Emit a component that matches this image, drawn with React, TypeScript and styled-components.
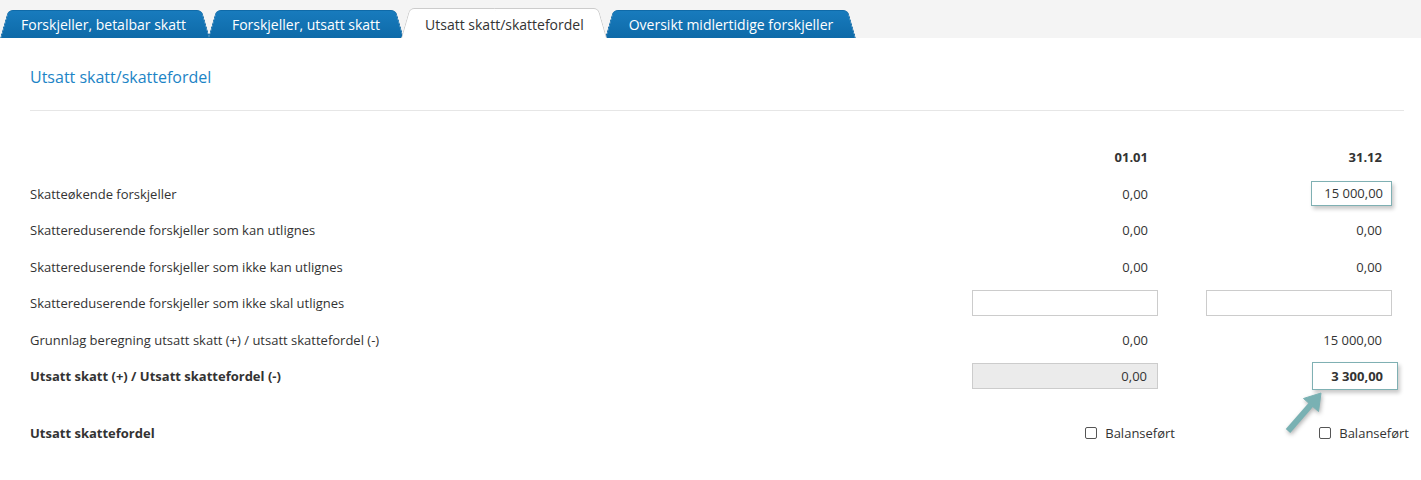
import React from 'react'
import styled, { createGlobalStyle } from 'styled-components'

type Row = {
  label: string
  bold?: boolean
  start: React.ReactNode
  end: React.ReactNode
}

const GlobalStyle = createGlobalStyle`
  html, body {
    margin: 0;
    padding: 0;
    background: #ffffff;
    font-family: "Open Sans", "Liberation Sans", sans-serif;
    font-size: 13px;
    color: #333333;
  }
`

const tabs = [
  'Forskjeller, betalbar skatt',
  'Forskjeller, utsatt skatt',
  'Utsatt skatt/skattefordel',
  'Oversikt midlertidige forskjeller',
]

const Arrow = () => (
  <ArrowWrap viewBox="0 0 50 50" width="50" height="50">
    <g fill="#79b1b3" stroke="#79b1b3">
      <line x1="8" y1="42" x2="31" y2="15.6" strokeWidth="6" strokeLinecap="butt" />
      <polygon points="41,4 38.5,22.5 23.5,9.5" strokeWidth="1" strokeLinejoin="round" />
    </g>
  </ArrowWrap>
)

const Checkbox = () => (
  <CheckLabel>
    <Box type="checkbox" />
    Balanseført
  </CheckLabel>
)

const App = () => {
  const rows: Row[] = [
    { label: 'Skatteøkende forskjeller', start: <Value>0,00</Value>, end: <Focused>15 000,00</Focused> },
    { label: 'Skattereduserende forskjeller som kan utlignes', start: <Value>0,00</Value>, end: <Value>0,00</Value> },
    { label: 'Skattereduserende forskjeller som ikke kan utlignes', start: <Value>0,00</Value>, end: <Value>0,00</Value> },
    { label: 'Skattereduserende forskjeller som ikke skal utlignes', start: <Field />, end: <Field /> },
    { label: 'Grunnlag beregning utsatt skatt (+) / utsatt skattefordel (-)', start: <Value>0,00</Value>, end: <Value>15 000,00</Value> },
    { label: 'Utsatt skatt (+) / Utsatt skattefordel (-)', bold: true, start: <Field $disabled>0,00</Field>, end: <Result>3 300,00</Result> },
  ]

  return (
    <>
      <GlobalStyle />
      <TabBar>
        {tabs.map((t, i) => (
          <Tab key={t} $active={i === 2}>
            <span>{t}</span>
          </Tab>
        ))}
      </TabBar>
      <Panel>
        <Heading>Utsatt skatt/skattefordel</Heading>
        <Table>
          <Label />
          <Head>01.01</Head>
          <Head>31.12</Head>
          {rows.map(r => (
            <React.Fragment key={r.label}>
              <Label $bold={r.bold}>{r.label}</Label>
              <Cell>{r.start}</Cell>
              <Cell>{r.end}</Cell>
            </React.Fragment>
          ))}
          <Label $bold>Utsatt skattefordel</Label>
          <Cell><Checkbox /></Cell>
          <Cell><Checkbox /></Cell>
        </Table>
        <Arrow />
      </Panel>
    </>
  )
}

const TabBar = styled.div`
  display: flex;
  align-items: flex-end;
  height: 38px;
  background: #f4f4f4;
`

const Tab = styled.div<{ $active?: boolean }>`
  position: relative;
  height: ${p => (p.$active ? 30 : 28)}px;
  padding: 0 23px 0 24px;
  margin-left: -2px;
  display: flex;
  align-items: center;
  font-size: 14px;
  color: ${p => (p.$active ? '#333333' : '#ffffff')};
  z-index: ${p => (p.$active ? 2 : 1)};

  &:first-child {
    margin-left: 0;
    padding-left: 21px;
    padding-right: 24px;
  }

  span {
    position: relative;
    z-index: 1;
    padding-top: ${p => (p.$active ? 2 : 0)}px;
  }

  &::before,
  &::after {
    content: '';
    position: absolute;
    top: 0;
    bottom: 0;
    width: 50%;
    background: ${p => (p.$active ? '#ffffff' : 'linear-gradient(#187bbd, #0e6aa8)')};
    border-top: 1px solid ${p => (p.$active ? '#cccccc' : '#0f6aa8')};
    transform-origin: bottom;
  }

  &::before {
    left: 0;
    border-left: 1px solid ${p => (p.$active ? '#cccccc' : '#0f6aa8')};
    border-top-left-radius: 5px;
    transform: skewX(-16deg);
  }

  &::after {
    right: 0;
    border-right: 1px solid ${p => (p.$active ? '#cccccc' : '#0f6aa8')};
    border-top-right-radius: 5px;
    transform: skewX(16deg);
  }
`

const Panel = styled.div`
  position: relative;
  padding: 0 29px 0 30px;
`

const Heading = styled.h2`
  margin: 0 -12px 0 0;
  padding: 28px 0 22px;
  font-size: 16px;
  line-height: 22px;
  font-weight: 400;
  color: #1c84c6;
  border-bottom: 1px solid #e6e6e6;
`

const Table = styled.div`
  display: grid;
  grid-template-columns: 1fr 186px 186px;
  grid-template-rows: repeat(7, 36.5px) 77px;
  column-gap: 48px;
  align-items: center;
  margin-top: 28px;
`

const Label = styled.div<{ $bold?: boolean }>`
  font-weight: ${p => (p.$bold ? 700 : 400)};
`

const Head = styled.div`
  text-align: right;
  padding-right: 10px;
  font-weight: 700;
`

const Cell = styled.div`
  display: flex;
  justify-content: flex-end;
`

const Value = styled.div`
  padding-right: 10px;
`

const Field = styled.div<{ $disabled?: boolean }>`
  box-sizing: border-box;
  width: 100%;
  height: 26px;
  padding-right: 10px;
  line-height: 24px;
  text-align: right;
  border: 1px solid #cccccc;
  background: ${p => (p.$disabled ? '#ebebeb' : '#ffffff')};
`

const Focused = styled.div`
  box-sizing: border-box;
  width: 81px;
  height: 25px;
  padding-right: 8px;
  line-height: 23px;
  text-align: right;
  border: 1px solid #7fb0b3;
  box-shadow: 2px 3px 4px rgba(0, 0, 0, 0.22);
`

const Result = styled(Focused)`
  width: 86px;
  height: 28px;
  line-height: 26px;
  margin-right: -6px;
  padding-right: 14px;
  font-weight: 700;
`

const CheckLabel = styled.label`
  display: flex;
  align-items: center;
  gap: 8px;
  margin-right: -17px;
`

const Box = styled.input`
  appearance: none;
  margin: 0;
  width: 12px;
  height: 12px;
  border: 1px solid #555555;
  border-radius: 2px;
  background: #ffffff;
`

const ArrowWrap = styled.svg`
  position: absolute;
  left: 1280px;
  top: 351px;
  filter: drop-shadow(1px 2px 2px rgba(0, 0, 0, 0.3));
`

export default App
